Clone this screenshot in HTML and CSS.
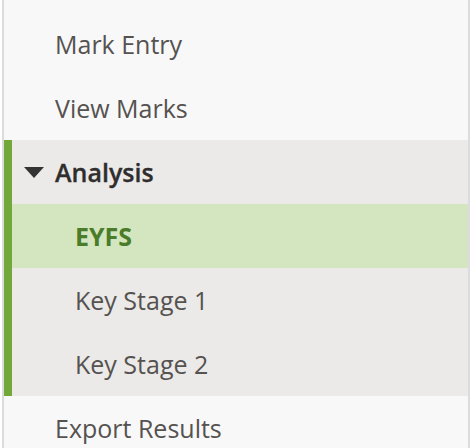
FILE: index.html
```html
<!DOCTYPE html>
<html lang="en">
<head>
  <meta charset="UTF-8">
  <title>Menu</title>
  <link rel="stylesheet" href="styles.css">
</head>
<body>

  <nav class="side-nav">
    <a class="nav-item" href="#">Mark Entry</a>
    <a class="nav-item" href="#">View Marks</a>

    <div class="nav-group">
      <a class="nav-item group-title" href="#">
        <svg class="caret" width="20" height="11" viewBox="0 0 20 11"><path d="M0 0H20L10 11Z" fill="#333"/></svg>
        Analysis
      </a>
      <a class="nav-item sub-item active" href="#">EYFS</a>
      <a class="nav-item sub-item" href="#">Key Stage 1</a>
      <a class="nav-item sub-item" href="#">Key Stage 2</a>
    </div>

    <a class="nav-item" href="#">Export Results</a>
  </nav>

</body>
</html>
```

FILE: styles.css
```css
body{
  margin: 0;
  background-color: #ffffff;
  font-family: "Open Sans", Lato, sans-serif;
}
.side-nav{
  width: 468px;
  height: 448px;
  overflow: hidden;
  margin-left: 2px;
  padding-top: 12px;
  box-sizing: border-box;
  background-color: #f8f8f8;
  border-left: 2px solid #dcdcdc;
  border-right: 2px solid #dcdcdc;
  display: flex;
  flex-direction: column;
}
.nav-item{
  display: flex;
  align-items: center;
  gap: 11px;
  flex-shrink: 0;
  height: 64px;
  padding-left: 51px;
  font-size: 25px;
  color: #555250;
  text-decoration: none;
}
.nav-group{
  background-color: #ebeae8;
  border-left: 8px solid #72a83a;
}
.nav-group .nav-item{
  padding-left: 43px;
}
.nav-group .group-title{
  padding-left: 12px;
  font-weight: 600;
  color: #2f2d2d;
  -webkit-text-stroke: 0.3px #2f2d2d;
}
.nav-group .sub-item{
  padding-left: 63px;
}
.nav-group .active{
  background-color: #d4e6c0;
  color: #4a7c2a;
  font-weight: bold;
}
```
